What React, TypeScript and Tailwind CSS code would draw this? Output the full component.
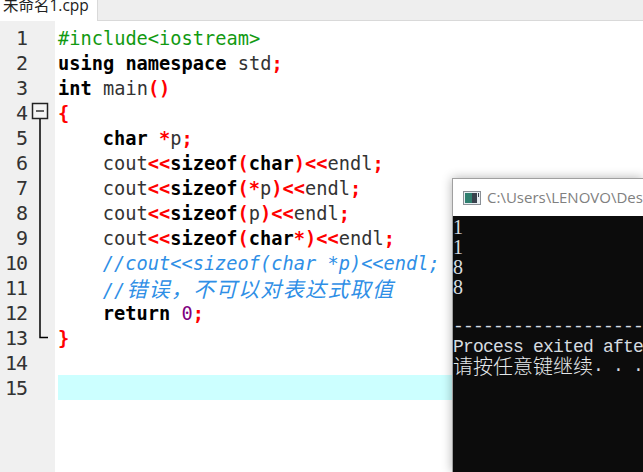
import React from "react";

const K = ({ children }: { children: React.ReactNode }) => <span className="font-bold text-black">{children}</span>;
const R = ({ children }: { children: React.ReactNode }) => <span className="font-bold text-[#ff0000]">{children}</span>;
const I = ({ children }: { children?: React.ReactNode }) => <span className="inline-block w-[44.8px]">{children}</span>;
const Cn = ({ children }: { children: React.ReactNode }) => (
  <span className="ml-[1px] text-[21px] tracking-[1.35px] [font-family:'Noto_Sans_CJK_SC',sans-serif]">{children}</span>
);

const lines: React.ReactNode[] = [
  <span className="text-[#129a12]">#include&lt;iostream&gt;</span>,
  <><K>using namespace</K> std<R>;</R></>,
  <><K>int</K> main<R>()</R></>,
  <R>{"{"}</R>,
  <><I /><K>char</K> <R>*</R>p<R>;</R></>,
  <><I />cout<R>&lt;&lt;</R><K>sizeof</K><R>(</R><K>char</K><R>)&lt;&lt;</R>endl<R>;</R></>,
  <><I />cout<R>&lt;&lt;</R><K>sizeof</K><R>(*</R>p<R>)&lt;&lt;</R>endl<R>;</R></>,
  <><I />cout<R>&lt;&lt;</R><K>sizeof</K><R>(</R>p<R>)&lt;&lt;</R>endl<R>;</R></>,
  <><I />cout<R>&lt;&lt;</R><K>sizeof</K><R>(</R><K>char</K><R>*)&lt;&lt;</R>endl<R>;</R></>,
  <><I /><span className="italic text-[#2f8fe6]">//cout&lt;&lt;sizeof(char *p)&lt;&lt;endl;</span></>,
  <><I /><span className="italic text-[#2f8fe6]">//<Cn>错误，不可以对表达式取值</Cn></span></>,
  <><I /><K>return</K> <span className="text-[#800080]">0</span><R>;</R></>,
  <R>{"}"}</R>,
  <></>,
  <></>,
];

export default function App() {
  return (
    <div className="relative h-[472px] w-[643px] overflow-hidden bg-white">
      <div className="flex h-[21px] bg-white">
        <div className="h-[21px] w-[97px] overflow-hidden pl-[3px]">
          <div className="-mt-[7px] whitespace-nowrap text-[15.5px] leading-[24px] text-[#222] [font-family:'Open_Sans','Noto_Sans_CJK_SC',sans-serif]">
            未命名1.cpp
          </div>
        </div>
        <div className="h-[21px] flex-1 border-b border-l border-[#d9d9d9] bg-[#eeeeee]" />
      </div>

      <div className="flex h-[451px] text-[18.67px] text-[#333] [font-family:'DejaVu_Sans_Mono',monospace]">
        <div className="w-[55px] bg-[#f0f0f0] pt-[4px]">
          {lines.map((_, i) => (
            <div key={i} className="h-[25px] w-[27px] text-right text-[20px] leading-[27px] tracking-[-1px] text-[#333] [font-family:'DejaVu_Sans_Mono',monospace]">
              {i + 1}
            </div>
          ))}
        </div>
        <div className="flex-1 pl-[3px] pt-[4px]">
          {lines.map((l, i) => (
            <div key={i} className={"h-[25px] whitespace-pre leading-[27px]" + (i === 14 ? " bg-[#ccffff]" : "")}>
              {l}
            </div>
          ))}
        </div>
      </div>

      <svg className="absolute left-[30px] top-[100px]" width="20" height="242" viewBox="0 0 20 242" fill="none">
        <rect x="2.5" y="3.5" width="15" height="15" fill="#f4f4f4" stroke="#222" strokeWidth="1.5" />
        <path d="M6 11H14" stroke="#000" strokeWidth="1.2" />
        <path d="M10 19V237.5H18" stroke="#000" strokeWidth="1.5" />
      </svg>

      <div className="absolute left-[452px] top-[178px] h-[294px] w-[191px] border-l border-t border-[#a0a0a0] bg-white shadow-[0_0_10px_rgba(0,0,0,0.3)]">
        <div className="flex h-[37px] items-center pl-[10px]">
          <svg width="18" height="16" viewBox="0 0 18 16" className="shrink-0">
            <rect x="0" y="1" width="18" height="14" fill="#8a8f95" />
            <rect x="1" y="2" width="16" height="12" fill="#e8eef2" />
            <rect x="2" y="3" width="7" height="10" fill="#2f7f6f" />
            <rect x="9" y="3" width="5" height="10" fill="#39424d" />
            <rect x="15" y="3" width="1" height="4" fill="#39424d" />
          </svg>
          <span className="ml-[6px] whitespace-nowrap text-[15px] text-[#808080] [font-family:'Open_Sans',sans-serif]">C:\Users\LENOVO\Des</span>
        </div>
        <div className="h-[257px] overflow-hidden bg-[#0c0c0c] text-[18px] leading-[22px] tracking-[-0.8px] text-[#d6dce0] [font-family:'Liberation_Mono',monospace]">
          <div className="h-[20px] text-[20px] tracking-normal [font-family:'Liberation_Serif',serif]">1</div>
          <div className="h-[20px] text-[20px] tracking-normal [font-family:'Liberation_Serif',serif]">1</div>
          <div className="h-[20px] text-[20px] tracking-normal [font-family:'Liberation_Serif',serif]">8</div>
          <div className="h-[20px] text-[20px] tracking-normal [font-family:'Liberation_Serif',serif]">8</div>
          <div className="h-[20px]" />
          <div className="h-[20px] overflow-hidden whitespace-pre">-------------------</div>
          <div className="h-[20px] overflow-hidden whitespace-pre">Process exited afte</div>
          <div className="h-[20px] whitespace-pre leading-[20px]">
            <span className="inline-block h-[20px] align-top text-[20px] font-light leading-[20px] tracking-normal text-[#e4e8ea] [font-family:'Noto_Sans_CJK_SC',sans-serif]">请按任意键继续</span>. . .
          </div>
        </div>
      </div>
    </div>
  );
}
